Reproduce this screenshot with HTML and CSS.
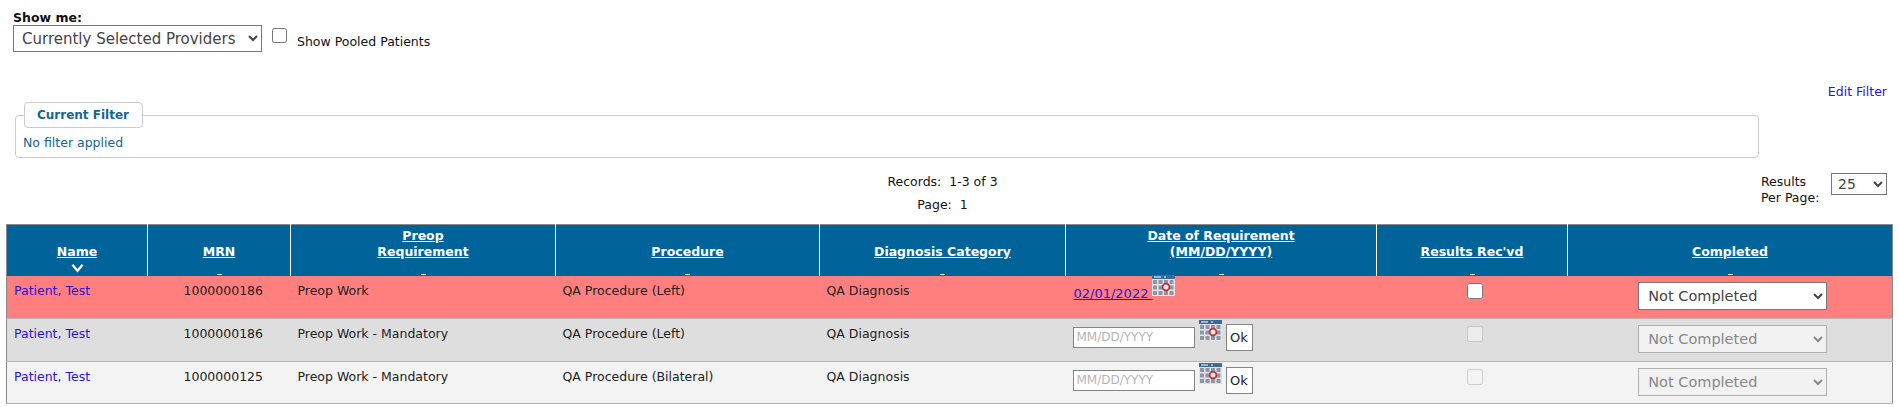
FILE: index.html
```html
<!DOCTYPE html>
<html lang="en">
<head>
<meta charset="utf-8">
<title>Preop Requirements</title>
<link rel="stylesheet" href="styles.css">
</head>
<body>
<svg class="defs" width="0" height="0" aria-hidden="true">
  <symbol id="cal" viewBox="0 0 23 21">
    <rect width="23" height="21" fill="#dfe3e8"/>
    <rect width="23" height="4" fill="#3f6a94"/>
    <rect x="2" y="1.500" width="7" height="1" fill="#fff"/>
    <rect x="12" y="1.500" width="2" height="1" fill="#fff"/>
    <g fill="#8b97a5">
      <rect x="1" y="5" width="4" height="4"/><rect x="6.500" y="5" width="4" height="4"/><rect x="12" y="5" width="4" height="4"/><rect x="17.500" y="5" width="4" height="4"/>
      <rect x="1" y="10.500" width="4" height="4"/><rect x="6.500" y="10.500" width="4" height="4"/><rect x="12" y="10.500" width="4" height="4"/><rect x="17.500" y="10.500" width="4" height="4"/>
      <rect x="1" y="16" width="4" height="4"/><rect x="6.500" y="16" width="4" height="4"/><rect x="12" y="16" width="4" height="4"/><rect x="17.500" y="16" width="4" height="4"/>
    </g>
    <circle cx="14" cy="12" r="3.400" fill="#e8e8e8" stroke="#c23038" stroke-width="1.800"/>
  </symbol>
</svg>

<section class="show">
  <div class="show-title">Show me:</div>
  <div class="show-row">
    <select class="sel sel-prov"><option>Currently Selected Providers</option></select>
    <input class="chk chk-pool" type="checkbox">
    <label class="pool-label">Show Pooled Patients</label>
  </div>
</section>

<section class="filter-row">
  <fieldset class="filter">
    <legend class="filter-legend">Current Filter</legend>
    <div class="filter-text">No filter applied</div>
  </fieldset>
  <a class="edit-link" href="#">Edit Filter</a>
</section>

<section class="pager">
  <div class="records">
    <div>Records:&nbsp; 1-3 of 3</div>
    <div class="page-line">Page:&nbsp; 1</div>
  </div>
  <div class="per-page">
    <span class="per-label">Results<br>Per Page:</span>
    <select class="sel sel-size"><option>25</option></select>
  </div>
</section>

<table class="grid">
  <colgroup>
    <col class="c1"><col class="c2"><col class="c3"><col class="c4"><col class="c5"><col class="c6"><col class="c7"><col class="c8">
  </colgroup>
  <thead>
    <tr>
      <th><div class="th"><a href="#">Name</a><svg class="sort" viewBox="0 0 14 10"><path d="M1.500 1.500 7 8l5.500-6.500" fill="none" stroke="#fff" stroke-width="2.400"/></svg></div></th>
      <th><div class="th"><a href="#">MRN</a><i class="dash"></i></div></th>
      <th><div class="th"><a href="#">Preop<br>Requirement</a><i class="dash"></i></div></th>
      <th><div class="th"><a href="#">Procedure</a><i class="dash"></i></div></th>
      <th><div class="th"><a href="#">Diagnosis Category</a><i class="dash"></i></div></th>
      <th><div class="th"><a href="#">Date of Requirement<br>(MM/DD/YYYY)</a><i class="dash"></i></div></th>
      <th><div class="th"><a href="#">Results Rec'vd</a><i class="dash"></i></div></th>
      <th><div class="th"><a href="#">Completed</a><i class="dash"></i></div></th>
    </tr>
  </thead>
  <tbody>
    <tr class="r-late">
      <td><a href="#">Patient, Test</a></td>
      <td class="mrn">1000000186</td>
      <td>Preop Work</td>
      <td>QA Procedure (Left)</td>
      <td>QA Diagnosis</td>
      <td><div class="date"><a class="date-link" href="#">02/01/2022 </a><svg class="cal cal-first"><use href="#cal"/></svg></div></td>
      <td class="ctr"><input class="chk chk-row" type="checkbox"></td>
      <td class="ctr"><select class="sel sel-done"><option>Not Completed</option></select></td>
    </tr>
    <tr class="r-even">
      <td><a href="#">Patient, Test</a></td>
      <td class="mrn">1000000186</td>
      <td>Preop Work - Mandatory</td>
      <td>QA Procedure (Left)</td>
      <td>QA Diagnosis</td>
      <td><div class="date"><input class="date-in" placeholder="MM/DD/YYYY"><svg class="cal"><use href="#cal"/></svg><button class="ok">Ok</button></div></td>
      <td class="ctr"><input class="chk chk-row" type="checkbox" disabled></td>
      <td class="ctr"><select class="sel sel-done" disabled><option>Not Completed</option></select></td>
    </tr>
    <tr class="r-odd">
      <td><a href="#">Patient, Test</a></td>
      <td class="mrn">1000000125</td>
      <td>Preop Work - Mandatory</td>
      <td>QA Procedure (Bilateral)</td>
      <td>QA Diagnosis</td>
      <td><div class="date"><input class="date-in" placeholder="MM/DD/YYYY"><svg class="cal"><use href="#cal"/></svg><button class="ok">Ok</button></div></td>
      <td class="ctr"><input class="chk chk-row" type="checkbox" disabled></td>
      <td class="ctr"><select class="sel sel-done" disabled><option>Not Completed</option></select></td>
    </tr>
  </tbody>
</table>
</body>
</html>
```

FILE: styles.css
```css
* { box-sizing: border-box; }
html, body { margin: 0; padding: 0; }
body {
  width: 1899px;
  height: 407px;
  overflow: hidden;
  background: #fff;
  color: #111;
  font-family: "DejaVu Sans", Verdana, sans-serif;
  font-size: 12.5px;
}
a { color: #2a14d8; text-decoration: none; }
.defs { position: absolute; }

.show { padding: 10px 0 0 13px; height: 102px; }
.show-title { font-weight: 700; font-size: 12.5px; line-height: 15px; color: #111; }
.show-row { display: flex; align-items: flex-start; }
.sel {
  font-family: "DejaVu Sans", Verdana, sans-serif;
  background: #fff;
  color: #444;
  border: 1px solid #767676;
  border-radius: 0;
}
.sel-prov { width: 249px; height: 27px; font-size: 15px; padding: 0 4px; }
.chk { margin: 0; }
.chk-pool { width: 15px; height: 15px; margin: 3px 0 0 10px; }
.pool-label { margin: 10px 0 0 10px; line-height: 14px; }

.filter-row { position: relative; height: 64px; padding: 0 0 0 15px; }
.filter {
  width: 1744px;
  height: 56px;
  margin: 0;
  padding: 0 0 0 7px;
  border: 1px solid #ccc;
  border-radius: 4px;
}
.filter-legend {
  padding: 0 13px 0 12px;
  height: 26px;
  line-height: 24px;
  margin-left: 1px;
  border: 1px solid #ccc;
  border-radius: 4px;
  background: #fff;
  color: #16658f;
  font-weight: 700;
  font-size: 12px;
}
.filter-text { color: #16658f; line-height: 15px; padding-top: 7px; }
.edit-link { position: absolute; right: 12px; top: -18px; line-height: 15px; }

.pager { display: flex; height: 58px; padding-left: 885px; }
.records { width: 115px; text-align: center; line-height: 15px; padding-top: 8px; white-space: nowrap; }
.page-line { padding-top: 8px; }
.per-page { display: flex; margin-left: 761px; padding-top: 8px; align-items: flex-start; }
.per-label { width: 70px; line-height: 16px; white-space: nowrap; }
.sel-size { width: 56px; height: 22px; font-size: 14px; padding: 0 2px; margin-top: -1px; }

.grid {
  table-layout: fixed;
  width: 1886px;
  margin-left: 6px;
  border-collapse: collapse;
  border: 1px solid #8a8a8a;
}
.c1 { width: 141px; } .c2 { width: 143px; } .c3 { width: 265px; } .c4 { width: 264px; }
.c5 { width: 246px; } .c6 { width: 311px; } .c7 { width: 191px; } .c8 { width: 325px; }
.grid th {
  height: 51px;
  padding: 0;
  background: #00649a;
  border-left: 1px solid #fff;
  vertical-align: top;
  overflow: hidden;
}
.grid th:first-child { border-left: 0; }
.th {
  height: 51px;
  display: grid;
  grid-template-rows: 35px 16px;
  justify-items: center;
  align-items: end;
  font-size: 12.5px;
  line-height: 16px;
}
.th a { color: #fff; text-decoration: underline; font-weight: 700; }
.sort { width: 13px; height: 10px; margin-bottom: 3px; }
.dash { display: block; width: 5px; height: 1px; background: #fff; margin-bottom: 1px; }

.grid td {
  padding: 7px 7px 0;
  vertical-align: top;
  line-height: 15px;
  border-bottom: 1px solid #b4b4b4;
  color: #222;
}
.grid td.mrn { padding-left: 36px; }
.grid td.ctr { text-align: center; padding-top: 0; }
.r-late { height: 42px; background: #ff7f7f; }
.r-even { height: 43px; background: #dedede; }
.r-odd { height: 42px; background: #f3f3f3; }

.date { display: flex; align-items: flex-start; }
.date-link { color: #2a14d8; text-decoration: underline; font-size: 13px; padding: 3px 0 0 1px; white-space: pre; }
.cal { width: 23px; height: 21px; flex: none; }
.cal-first { margin: -8px 0 0 -1px; }
.date-in {
  width: 122px;
  height: 21px;
  margin: 0 4px 0 0;
  padding: 0 3px;
  border: 1px solid #858585;
  background: #fff;
  font-family: "DejaVu Sans", Verdana, sans-serif;
  font-size: 12px;
}
.date-in::placeholder { color: #b5b5b5; }
.r-even .date-in, .r-odd .date-in { margin-top: 1px; }
.r-even .cal, .r-odd .cal { margin-top: -6px; }
.ok {
  width: 27px;
  height: 27px;
  margin: -2px 0 0 4px;
  padding: 0;
  background: #fff;
  border: 1px solid #858585;
  border-radius: 0;
  color: #222;
  font-family: "DejaVu Sans", Verdana, sans-serif;
  font-size: 13px;
}
.chk-row { width: 16px; height: 16px; margin: 7px 0 0 5px; }
.sel-done {
  width: 189px;
  height: 28px;
  margin: 6px 0 0 6px;
  padding: 0 5px;
  font-size: 14.500px;
}
.sel-done:disabled { background: #f2f2f2; color: #888; border-color: #b0b0b0; opacity: 1; }
```
